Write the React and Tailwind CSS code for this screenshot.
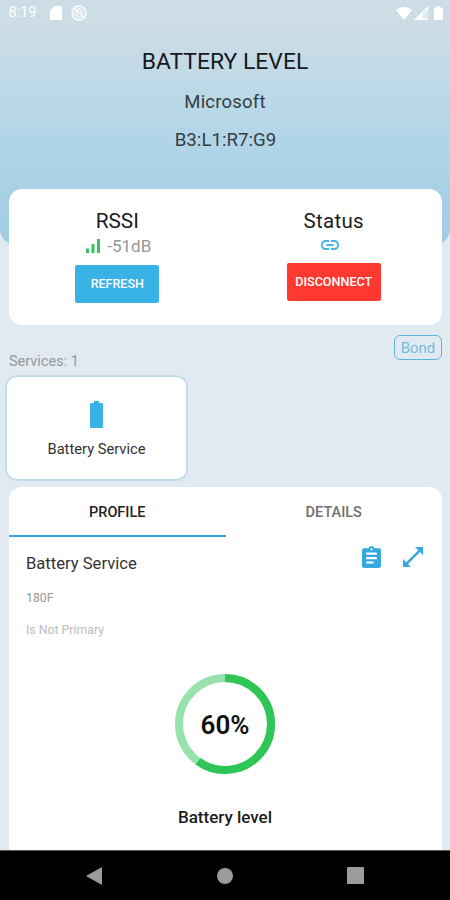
import React, { useState } from 'react';

const Icon = ({ children, className = "", viewBox = "0 0 24 24" }) => (
  <svg viewBox={viewBox} className={`block fill-current ${className}`} preserveAspectRatio="none">
    {children}
  </svg>
);

const StatusBar = () => (
  <div className="h-[26px] px-2 flex items-center text-white">
    <span className="w-[29px] text-[14.5px] leading-[26px] whitespace-nowrap">8:19</span>
    <Icon className="w-3 h-[14px] ml-[13px]" viewBox="0 0 12 14">
      <path d="M4.500 0H11a1 1 0 0 1 1 1v12a1 1 0 0 1-1 1H1a1 1 0 0 1-1-1V4.500z" />
    </Icon>
    <svg viewBox="0 0 16 16" className="w-4 h-4 ml-[9px] fill-none stroke-white">
      <circle cx="8" cy="8" r="7" strokeWidth="1.300" />
      <circle cx="8" cy="8" r="4.500" strokeWidth="1" />
      <path d="M6 11.500V5.500h2.600a1.700 1.700 0 0 1 .600 3.300M3.200 3.200l9.600 9.600" strokeWidth="1.200" />
    </svg>
    <Icon className="w-4 h-[13px] ml-auto" viewBox="0 0 16 14">
      <path d="M8 14 0 3.200C4.700-1 11.300-1 16 3.200z" />
    </Icon>
    <Icon className="w-[14px] h-[14px] ml-[2px]" viewBox="0 0 14 14">
      <path d="M14 0v14H0z" opacity=".4" />
      <path d="M14 0v5h-1V2.400L9 6.500V13h5v1H0z" />
    </Icon>
    <Icon className="w-[9px] h-[14px] ml-[6px] -mr-px" viewBox="0 0 9 14">
      <path d="M3 0h3v1.500h2a1 1 0 0 1 1 1V13a1 1 0 0 1-1 1H1a1 1 0 0 1-1-1V2.500a1 1 0 0 1 1-1h2z" />
    </Icon>
  </div>
);

const Header = ({ title, vendor, address }) => (
  <header className="h-[245px] rounded-b-[16px] text-center bg-linear-to-b from-[#cddde6] from-10% via-[#b2d6e8] via-55% to-[#9fcde5]">
    <StatusBar />
    <h1 className="mt-[24px] h-6 leading-6 text-[22.9px] text-[#15191c]">{title}</h1>
    <p className="mt-4 h-6 leading-6 text-[18.5px] tracking-[0.2px] text-[#353d42]">{vendor}</p>
    <p className="mt-[14px] h-6 leading-6 text-[18.7px] pl-px text-[#353d42]">{address}</p>
  </header>
);

const ConnectionCard = () => (
  <section className="relative h-[136px] ml-[9px] mr-2 -mt-[56px] bg-white rounded-[13px] grid grid-cols-2">
    <div className="flex flex-col items-center pt-5">
      <h2 className="h-6 leading-6 text-[20.8px] text-[#1c1c1c]">RSSI</h2>
      <div className="mt-[3px] h-5 flex items-center gap-[7px] ml-[3px]">
        <Icon className="w-[14px] h-[14px] text-[#36c45f]" viewBox="0 0 14 14">
          <path d="M0 9.500h3V14H0zM5.500 5h3v9h-3zM11 0h3v14h-3z" />
        </Icon>
        <span className="text-[17px] leading-5 text-[#969696]">-51dB</span>
      </div>
      <button className="mt-[9px] w-[84px] h-[38px] rounded-[2px] bg-[#39b2e5] text-white text-[12.500px] font-medium">REFRESH</button>
    </div>
    <div className="flex flex-col items-center pt-5">
      <h2 className="h-6 leading-6 text-[20.5px] tracking-[0.300px] text-[#1c1c1c]">Status</h2>
      <Icon className="mt-[7px] mr-2 w-[18px] h-[10px] text-[#45b3e6]" viewBox="2 7 20 10">
        <path d="M3.900 12c0-1.710 1.390-3.100 3.100-3.100h4V7H7c-2.760 0-5 2.240-5 5s2.240 5 5 5h4v-1.900H7c-1.710 0-3.100-1.390-3.100-3.100zM8 13h8v-2H8v2zm9-6h-4v1.900h4c1.710 0 3.100 1.390 3.100 3.100s-1.390 3.100-3.100 3.100h-4V17h4c2.760 0 5-2.240 5-5s-2.240-5-5-5z" />
      </Icon>
      <button className="mt-[13px] w-[94px] h-[38px] rounded-[2px] bg-[#ff392f] text-white text-[12.600px] font-medium">DISCONNECT</button>
    </div>
  </section>
);

const Services = () => (
  <section className="h-[162px] flex justify-between">
    <div className="pt-7 pl-[5px]">
      <p className="pl-1 h-[18px] leading-[18px] text-[14.500px] text-[#92989c]">Services: 1</p>
      <div className="mt-1 w-[183px] h-[106px] rounded-[12px] border-2 border-[#c5dde8] bg-white flex flex-col items-center">
        <Icon className="mt-[24px] w-[13px] h-[27px] text-[#39b2e5]" viewBox="0 0 13 27">
          <path d="M4 0h5v2h3a1 1 0 0 1 1 1v23a1 1 0 0 1-1 1H1a1 1 0 0 1-1-1V3a1 1 0 0 1 1-1h3z" />
        </Icon>
        <span className="mt-[11px] h-5 leading-5 text-[14.700px] text-[#333]">Battery Service</span>
      </div>
    </div>
    <button className="mt-[10px] mr-2 w-[48px] h-[25px] rounded-[6px] border-[1.500px] border-[#5db5dc] text-[#72bcdd] text-[15px] leading-[22px]">Bond</button>
  </section>
);

const LevelRing = ({ value }) => (
  <div className="relative w-[100px] h-[100px]">
    <svg viewBox="0 0 100 100" className="w-full h-full -rotate-90 fill-none">
      <circle cx="50" cy="50" r="46" stroke="#98e2ad" strokeWidth="8" />
      <circle cx="50" cy="50" r="46" stroke="#2fc657" strokeWidth="8" pathLength="100" strokeDasharray={`${value} 100`} />
    </svg>
    <span className="absolute inset-0 pt-[2px] flex items-center justify-center text-[26px] font-semibold text-[#111]">{value}%</span>
  </div>
);

const ProfilePanel = () => {
  const [tab, setTab] = useState("profile");
  const active = "border-[#2eabd9] text-[#222]";
  const idle = "border-transparent text-[#707070]";
  return (
    <section className="flex-1 ml-[9px] mr-2 bg-white rounded-t-[13px] flex flex-col">
      <div className="grid grid-cols-2 h-[50px] text-[14.500px] font-medium">
        <button onClick={() => setTab("profile")} className={`pt-[3px] border-b-2 ${tab === "profile" ? active : idle}`}>PROFILE</button>
        <button onClick={() => setTab("details")} className={`pt-[3px] border-b-2 ${tab === "details" ? active : idle}`}>DETAILS</button>
      </div>
      <div className="flex justify-between pl-[17px] pr-[19px]">
        <div>
          <h3 className="mt-[15px] h-6 leading-6 text-[16.600px] text-[#333]">Battery Service</h3>
          <p className="mt-[12px] h-5 leading-5 text-[12.300px] text-[#999]">180F</p>
          <p className="mt-[12px] h-5 leading-5 text-[12.300px] text-[#bdbdbd]">Is Not Primary</p>
        </div>
        <div className="flex gap-[22px] pt-[9px] text-[#35a9dd]">
          <Icon className="w-[19px] h-[22px]" viewBox="3 1 18 20">
            <path d="M19 3h-4.180C14.400 1.840 13.300 1 12 1c-1.300 0-2.400.840-2.820 2H5c-1.100 0-2 .900-2 2v14c0 1.100.900 2 2 2h14c1.100 0 2-.900 2-2V5c0-1.100-.900-2-2-2zm-7 0c.550 0 1 .450 1 1s-.450 1-1 1-1-.450-1-1 .450-1 1-1zm2 14H7v-2h7v2zm3-4H7v-2h10v2zm0-4H7V7h10v2z" />
          </Icon>
          <Icon className="mt-[1px] w-5 h-5" viewBox="0 0 20 20">
            <path d="M12 0h8v8l-3-3L5 17l3 3H0v-8l3.200 3.200 12-12z" />
          </Icon>
        </div>
      </div>
      <div className="mt-[34px] mr-px flex flex-col items-center">
        <LevelRing value={60} />
        <p className="mt-[31px] h-6 leading-6 text-[17px] font-medium text-[#1c1c1c]">Battery level</p>
      </div>
    </section>
  );
};

const NavBar = () => (
  <nav className="h-[50px] bg-black border-t border-[#555] flex justify-between items-center pl-[86px] pr-[86px] text-[#9c9c9c]">
    <Icon className="w-4 h-[18px]" viewBox="0 0 16 18"><path d="M16 0v18L0 9z" /></Icon>
    <span className="w-4 h-4 rounded-full bg-[#9c9c9c]" />
    <span className="w-[17px] h-[17px] rounded-[1px] bg-[#9c9c9c]" />
  </nav>
);

export default function App() {
  return (
    <div className="w-[450px] h-[900px] bg-[#e2eaf1] flex flex-col overflow-hidden font-['Roboto',sans-serif]">
      <Header title="BATTERY LEVEL" vendor="Microsoft" address="B3:L1:R7:G9" />
      <ConnectionCard />
      <Services />
      <ProfilePanel />
      <NavBar />
    </div>
  );
}
